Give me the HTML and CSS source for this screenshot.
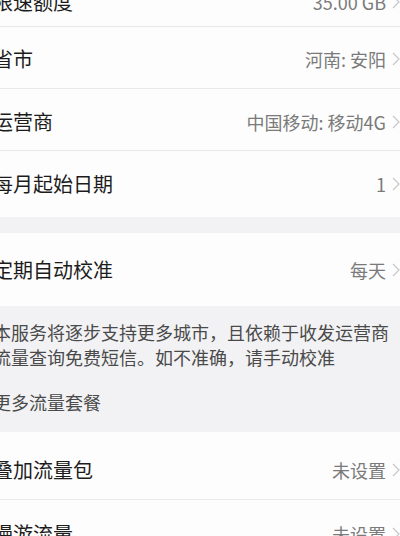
FILE: index.html
```html
<!DOCTYPE html>
<html lang="zh-CN">
<head>
    <meta charset="UTF-8">
    <meta name="viewport" content="width=device-width, initial-scale=1.0">
    <title>流量设置</title>
    <link rel="stylesheet" href="styles.css">
</head>
<body>

<main class="page">
    <section class="group group-top">
        <div class="row row-first">
            <span class="label">限速额度</span>
            <span class="value">35.00 GB</span>
            <svg class="chev" viewBox="0 0 8 14"><path d="M1 1 L7 7 L1 13"/></svg>
        </div>
        <div class="row row-city">
            <span class="label">省市</span>
            <span class="value">河南: 安阳</span>
            <svg class="chev" viewBox="0 0 8 14"><path d="M1 1 L7 7 L1 13"/></svg>
        </div>
        <div class="row row-carrier">
            <span class="label">运营商</span>
            <span class="value">中国移动: 移动4G</span>
            <svg class="chev" viewBox="0 0 8 14"><path d="M1 1 L7 7 L1 13"/></svg>
        </div>
        <div class="row row-date">
            <span class="label">每月起始日期</span>
            <span class="value">1</span>
            <svg class="chev" viewBox="0 0 8 14"><path d="M1 1 L7 7 L1 13"/></svg>
        </div>
    </section>

    <section class="group">
        <div class="row row-auto">
            <span class="label">定期自动校准</span>
            <span class="value">每天</span>
            <svg class="chev" viewBox="0 0 8 14"><path d="M1 1 L7 7 L1 13"/></svg>
        </div>
    </section>

    <section class="note">
        <p>本服务将逐步支持更多城市，且依赖于收发运营商流量查询免费短信。如不准确，请手动校准</p>
        <p class="more">更多流量套餐</p>
    </section>

    <section class="group">
        <div class="row row-pack">
            <span class="label">叠加流量包</span>
            <span class="value">未设置</span>
            <svg class="chev" viewBox="0 0 8 14"><path d="M1 1 L7 7 L1 13"/></svg>
        </div>
        <div class="row row-roam">
            <span class="label">漫游流量</span>
            <span class="value">未设置</span>
            <svg class="chev" viewBox="0 0 8 14"><path d="M1 1 L7 7 L1 13"/></svg>
        </div>
    </section>
</main>

</body>
</html>
```

FILE: styles.css
```css
body {
    margin: 0;
    padding: 0;
    background-color: #f2f2f4;
    font-family: "Noto Sans CJK SC", "Noto Sans", sans-serif;
    overflow: hidden;
}
.page {
    width: 400px;
    height: 536px;
    overflow: hidden;
}
.group {
    background-color: #fdfdfd;
}
.group-top {
    margin-top: -14px;
    margin-bottom: 16px;
}
.row {
    display: flex;
    align-items: center;
    margin-left: -7px;
    border-bottom: 1px solid #e9e9eb;
    box-sizing: border-box;
}
.row:last-child {
    border-bottom: none;
}
.row-first {
    height: 41px;
    padding-bottom: 9px;
}
.row-city {
    height: 62px;
    padding-top: 2px;
}
.row-carrier {
    height: 62px;
    padding-top: 4px;
}
.row-date {
    height: 66px;
}
.row-auto {
    height: 73px;
}
.row-pack {
    height: 68px;
    padding-top: 8px;
}
.row-roam {
    height: 68px;
}
.label {
    flex: 1;
    font-size: 20px;
    color: #1c1c1c;
    line-height: 28px;
}
.value {
    font-size: 18px;
    color: #7a7a7a;
    line-height: 26px;
}
.chev {
    width: 8px;
    height: 14px;
    margin-left: 6px;
    flex-shrink: 0;
}
.chev path {
    fill: none;
    stroke: #c8c8c8;
    stroke-width: 1.2;
}
.note {
    padding: 14px 0 17px 0;
    margin-left: -7px;
}
.note p {
    margin: 0;
    font-size: 18px;
    line-height: 25px;
    color: #4a4a4a;
}
.note .more {
    margin-top: 20px;
}
```
